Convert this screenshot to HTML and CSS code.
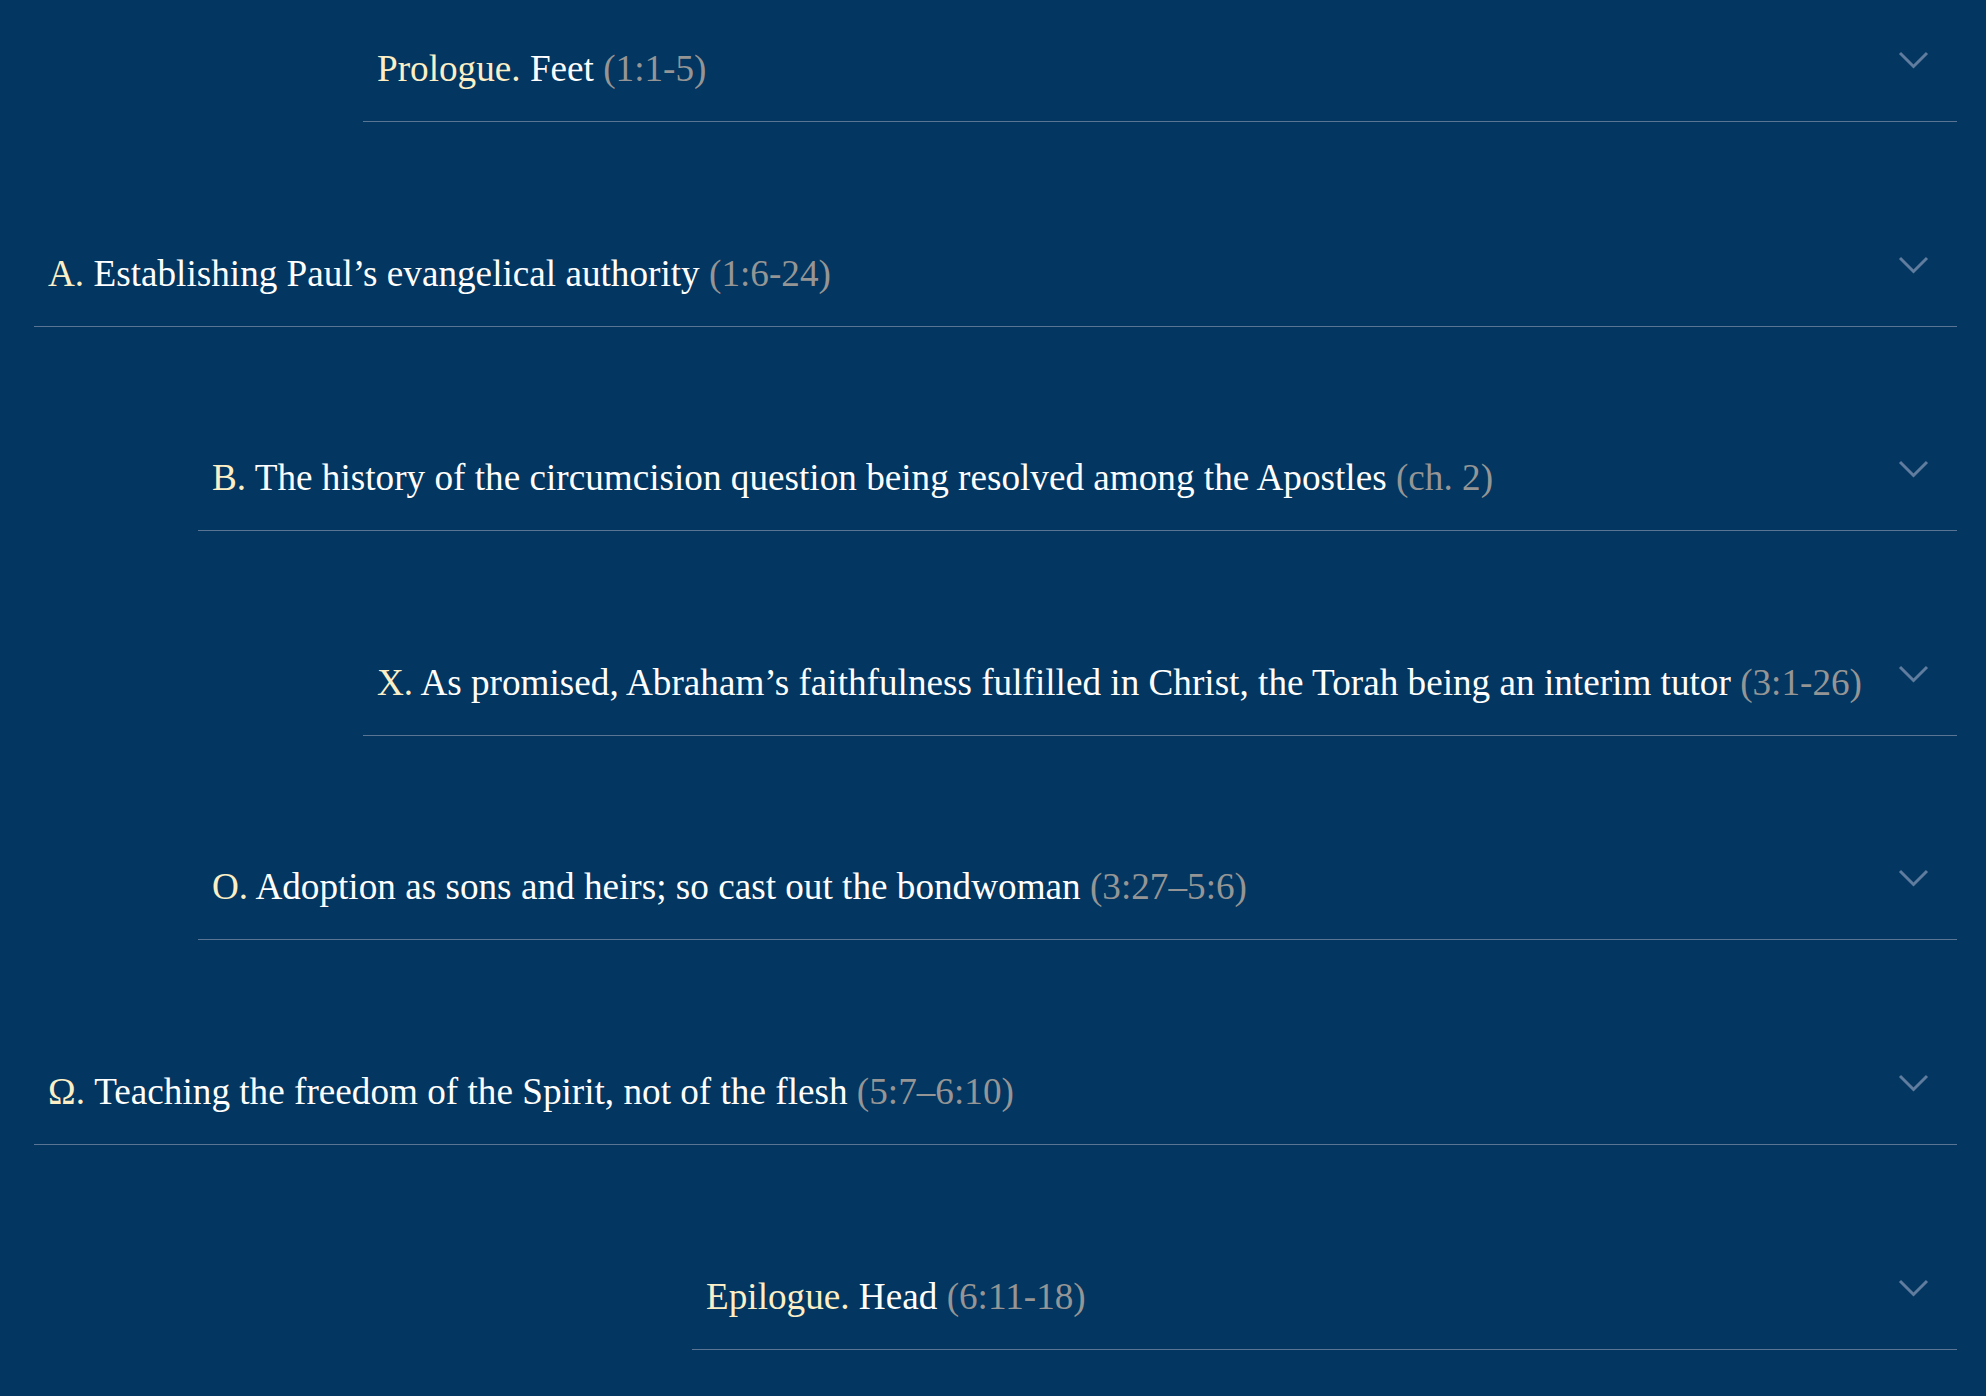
FILE: index.html
```html
<!DOCTYPE html>
<html lang="en">
<head>
<meta charset="utf-8">
<title>Galatians chiasm</title>
<link rel="stylesheet" href="styles.css">
</head>
<body>
<div class="outline">
  <div class="item lvl2">
    <div class="head">
      <span class="title"><span class="label">Prologue.</span> Feet <span class="ref">(1:1-5)</span></span>
      <svg class="chev" width="31" height="18" viewBox="0 0 31 18"><polyline points="2,2 15.5,15.5 29,2"/></svg>
    </div>
  </div>
  <div class="item lvl0">
    <div class="head">
      <span class="title"><span class="label">A.</span> Establishing Paul’s evangelical authority <span class="ref">(1:6-24)</span></span>
      <svg class="chev" width="31" height="18" viewBox="0 0 31 18"><polyline points="2,2 15.5,15.5 29,2"/></svg>
    </div>
  </div>
  <div class="item lvl1">
    <div class="head">
      <span class="title"><span class="label">B.</span> The history of the circumcision question being resolved among the Apostles <span class="ref">(ch. 2)</span></span>
      <svg class="chev" width="31" height="18" viewBox="0 0 31 18"><polyline points="2,2 15.5,15.5 29,2"/></svg>
    </div>
  </div>
  <div class="item lvl2">
    <div class="head">
      <span class="title"><span class="label">X.</span> As promised, Abraham’s faithfulness fulfilled in Christ, the Torah being an interim tutor <span class="ref">(3:1-26)</span></span>
      <svg class="chev" width="31" height="18" viewBox="0 0 31 18"><polyline points="2,2 15.5,15.5 29,2"/></svg>
    </div>
  </div>
  <div class="item lvl1">
    <div class="head">
      <span class="title"><span class="label">O.</span> Adoption as sons and heirs; so cast out the bondwoman <span class="ref">(3:27–5:6)</span></span>
      <svg class="chev" width="31" height="18" viewBox="0 0 31 18"><polyline points="2,2 15.5,15.5 29,2"/></svg>
    </div>
  </div>
  <div class="item lvl0">
    <div class="head">
      <span class="title"><span class="label">Ω.</span> Teaching the freedom of the Spirit, not of the flesh <span class="ref">(5:7–6:10)</span></span>
      <svg class="chev" width="31" height="18" viewBox="0 0 31 18"><polyline points="2,2 15.5,15.5 29,2"/></svg>
    </div>
  </div>
  <div class="item lvl4">
    <div class="head">
      <span class="title"><span class="label">Epilogue.</span> Head <span class="ref">(6:11-18)</span></span>
      <svg class="chev" width="31" height="18" viewBox="0 0 31 18"><polyline points="2,2 15.5,15.5 29,2"/></svg>
    </div>
  </div>
</div>
</body>
</html>
```
FILE: styles.css
```css
html, body {
  margin: 0;
  padding: 0;
  background: #033660;
}
body {
  min-height: 1396px;
  font-family: "Liberation Serif", "DejaVu Serif", serif;
  color: #ffffff;
}
.outline {
  display: flex;
  flex-direction: column;
  padding: 0 29px 0 34px;
}
.item {
  border-bottom: 1px solid #5a7494;
}
.item + .item {
  margin-top: 82.6px;
}
.lvl0 { margin-left: 0; }
.lvl1 { margin-left: 164px; }
.lvl2 { margin-left: 329px; }
.lvl4 { margin-left: 658px; }
.head {
  display: flex;
  justify-content: space-between;
  align-items: flex-start;
  padding: 49px 0 32px 14px;
}
.title {
  font-size: 37.2px;
  line-height: 40px;
  white-space: nowrap;
}
.label { color: #fcefc6; }
.ref { color: #959595; }
.chev {
  flex: none;
  margin-top: 2px;
  margin-right: 28px;
}
.chev polyline {
  fill: none;
  stroke: #607c9e;
  stroke-width: 3;
}
```
